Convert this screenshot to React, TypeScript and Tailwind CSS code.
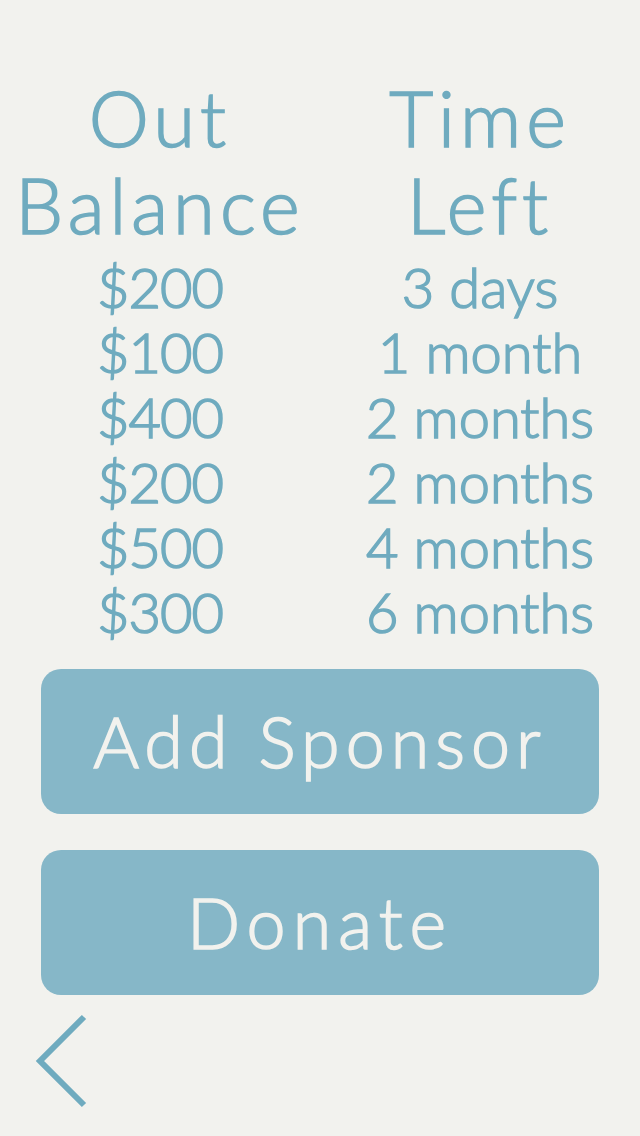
const rows = [
  { amount: "$200", time: "3 days" },
  { amount: "$100", time: "1 month" },
  { amount: "$400", time: "2 months" },
  { amount: "$200", time: "2 months" },
  { amount: "$500", time: "4 months" },
  { amount: "$300", time: "6 months" },
];

export default function App() {
  return (
    <div className="w-[640px] h-[1136px] bg-[#f2f2ee] font-['Lato',sans-serif] font-light text-[#6fabbf] flex flex-col overflow-hidden [-webkit-text-stroke:1.6px_currentColor]">
      {/* Header */}
      <div className="grid grid-cols-2 pt-[74px] text-center text-[76px] leading-[87px] tracking-[5px]">
        <div>
          <div>Out</div>
          <div>Balance</div>
        </div>
        <div>
          <div>Time</div>
          <div>Left</div>
        </div>
      </div>

      {/* Rows */}
      <div className="grid grid-cols-2 text-center text-[56px] leading-[65px] mt-[6px]">
        {rows.map((row, i) => (
          <div key={i} className="contents">
            <div className="tracking-[-1px]">{row.amount}</div>
            <div>{row.time}</div>
          </div>
        ))}
      </div>

      {/* Buttons */}
      <div className="flex flex-col gap-[36px] px-[41px] mt-[25px]">
        <button className="h-[145px] rounded-[20px] bg-[#86b7c8] text-[#f2f2ee] text-[70px] tracking-[6px]">
          Add Sponsor
        </button>
        <button className="h-[145px] rounded-[20px] bg-[#86b7c8] text-[#f2f2ee] text-[70px] tracking-[7px]">
          Donate
        </button>
      </div>

      {/* Back */}
      <div className="pl-[30px] mt-[14px]">
        <svg width="64" height="100" viewBox="0 0 64 100" fill="none" stroke="currentColor" strokeWidth="6">
          <polyline points="54,8 10,52 54,96" />
        </svg>
      </div>
    </div>
  );
}
